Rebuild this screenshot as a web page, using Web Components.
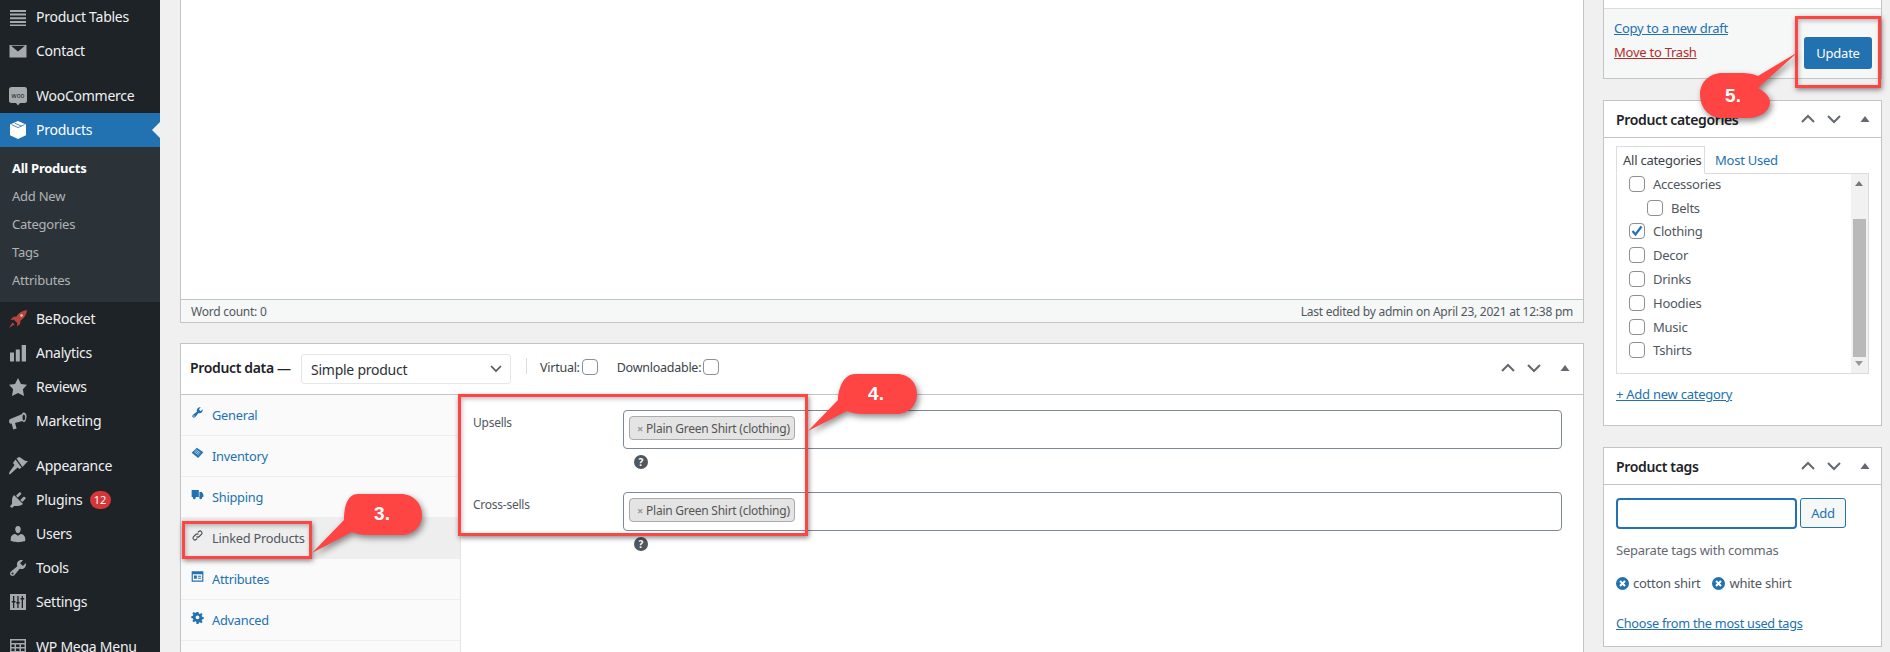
<!DOCTYPE html>
<html lang="en"><head><meta charset="utf-8"><title>Edit product</title>
<style>
html,body{margin:0;padding:0;height:652px;overflow:hidden;background:#f0f0f1;}
body{font-family:"Noto Sans","Open Sans",sans-serif;font-size:13px;color:#50575e;position:relative;letter-spacing:-.25px}
wp-page{height:652px}
</style></head><body>
<wp-page>
  <wp-menu slot="menu">
    <wp-item icon="lines">Product Tables</wp-item>
    <wp-item icon="mail">Contact</wp-item>
    <wp-item icon="woo" sep>WooCommerce</wp-item>
    <wp-item icon="cube" current>Products</wp-item>
    <wp-submenu>
      <wp-subitem strong>All Products</wp-subitem>
      <wp-subitem>Add New</wp-subitem>
      <wp-subitem>Categories</wp-subitem>
      <wp-subitem>Tags</wp-subitem>
      <wp-subitem>Attributes</wp-subitem>
    </wp-submenu>
    <wp-item icon="rocket" class="after-sub">BeRocket</wp-item>
    <wp-item icon="bars">Analytics</wp-item>
    <wp-item icon="star">Reviews</wp-item>
    <wp-item icon="mega">Marketing</wp-item>
    <wp-item icon="brush" sep>Appearance</wp-item>
    <wp-item icon="plug" badge="12">Plugins</wp-item>
    <wp-item icon="user">Users</wp-item>
    <wp-item icon="wrench">Tools</wp-item>
    <wp-item icon="sliders">Settings</wp-item>
    <wp-item icon="grid" sep>WP Mega Menu</wp-item>
  </wp-menu>

  <wp-editor slot="main-left" left="Word count: 0" right="Last edited by admin on April 23, 2021 at 12:38 pm"></wp-editor>
  <wp-product-data slot="main-left">
    <wp-tab icon="wrench">General</wp-tab>
    <wp-tab icon="tag">Inventory</wp-tab>
    <wp-tab icon="truck">Shipping</wp-tab>
    <wp-tab icon="link" active>Linked Products</wp-tab>
    <wp-tab icon="card">Attributes</wp-tab>
    <wp-tab icon="gear">Advanced</wp-tab>
    <wp-field slot="fields" label="Upsells">Plain Green Shirt (clothing)</wp-field>
    <wp-field slot="fields" label="Cross-sells">Plain Green Shirt (clothing)</wp-field>
  </wp-product-data>

  <wp-publish slot="main-right"></wp-publish>
  <wp-postbox slot="main-right" heading="Product categories" style="height:326px"><wp-categories></wp-categories></wp-postbox>
  <wp-postbox slot="main-right" heading="Product tags" style="height:200px"><wp-tags></wp-tags></wp-postbox>
</wp-page>

<wp-highlight style="left:182px;top:521px;width:130px;height:38px"></wp-highlight>
<wp-highlight style="left:458px;top:394px;width:350px;height:142px"></wp-highlight>
<wp-highlight style="left:1795px;top:16px;width:86px;height:72px"></wp-highlight>
<wp-callout style="left:309px;top:490px;width:116px;height:66px" d="M49 4H92C104 4 113 13 113 25S104 45 92 45H59C52 45 47 44 43 42L3 63 35 30C35 20 37 4 49 4Z" tx="73" ty="24">3.</wp-callout>
<wp-callout style="left:805px;top:370px;width:116px;height:64px" d="M50 4H92C104 4 112 13 112 24S104 44 92 44H58C52 44 46 43 42 41L3 61 33 30C33 20 38 4 50 4Z" tx="71" ty="24">4.</wp-callout>
<wp-callout style="left:1696px;top:48px;width:106px;height:74px" d="M102 4 62 40C73 46 74 52 74 54 74 63 64 70 52 70H26C13 70 4 60 4 46 4 34 14 25 26 25H46C52 25 58 26 62 28Z" tx="37" ty="48">5.</wp-callout>

<script>
const ICONS={
lines:'<path d="M2 3h16v2H2zm0 3.6h16v2H2zm0 3.7h16v2H2zm0 3.6h16v2H2zm0 3.6h16v1.5H2z"/>',
mail:'<path d="M1.5 4h17v12.5h-17z M3 4.8l7 5.6 7-5.6H3z" fill-rule="evenodd"/>',
woo:'<rect x="1" y="1" width="18" height="16" rx="2.5"/><path d="M8 17h4l-2 2.5z"/><text x="10" y="11.6" font-size="6.4" text-anchor="middle" fill="#1d2327" font-family="Noto Sans" style="letter-spacing:0">woo</text>',
cube:'<path d="M10 1l8 3.4v10.8L10 19l-8-3.8V4.4z"/><path d="M3.5 4.6l6.6 3 6.4-3M6.8 3.2l6.7 2.9" fill="none" stroke="#2271b1" stroke-width=".8"/>',
rocket:'<path d="M19 1c-4.5.4-8 2.6-10.6 6.4L5 8 2.5 11l3.4-.3 3.4 3.4-.3 3.4 3-2.5.6-3.4C16.4 9 18.6 5.500 19 1z" fill="#b5453c"/><path d="M4.500 13.500 1 19l5.500-3.500z" fill="#b5453c"/><circle cx="13.500" cy="6.500" r="1.300" fill="#e9c9c2"/>',
bars:'<path d="M2 9.500h4v9H2zm5.800-3h4v12h-4zM13.700 2h4.300v16.500h-4.300z"/>',
star:'<path d="M10 1l3 6 6 .75-4.120 4.620L16 19l-6-3-6 3 1.130-6.630L1 7.750 7 7z"/>',
mega:'<path d="M18.500 5c0 2.200-1 6.300-2.500 6.300-.6 0-1.100-.5-1.500-1.200L7 12l1.600 5.500-3.300 1L3.600 12.600l-.9.200C1.600 12.600 1 11.400 1.100 10.100c.1-1.200.7-2.100 1.800-2.400L13.800 3.300C14.300 2.300 15 1.600 15.700 1.600 17.200 1.600 18.500 3 18.500 5zM15.800 3.400c-.7 0-1.300 1.300-1.300 3s.6 3 1.300 3 1.300-1.300 1.300-3-.6-3-1.300-3z" fill-rule="evenodd"/>',
brush:'<path d="M8.500 2.500 11 1c2 .4 3 1.700 4.500 2.800 1.300 1 2.800 1.500 4.500 1.200L14.500 11z"/><path d="M7.500 3.500l6 8L11.500 13 9.600 11.500 2.500 18 1 18.500 1.500 16 6.500 9 5 7z"/>',
plug:'<path d="M13.110 4.360L9.870 7.600 8 5.730l3.240-3.240c.35-.34 1.050-.2 1.560.32.52.51.66 1.210.31 1.550zm-8 1.770l.91-1.120 9.010 9.010-1.190.84c-.71.71-2.630 1.160-3.820 1.160H6.140L4.900 17.260c-.59.59-1.540.59-2.120 0-.59-.58-.59-1.530 0-2.120l1.240-1.240v-3.880c0-1.130.4-3.190 1.090-3.890zm7.260 3.970l3.240-3.240c.34-.35 1.040-.21 1.550.31.52.51.66 1.210.31 1.550l-3.240 3.250z"/>',
user:'<path d="M10 9.250c-2.270 0-2.730-3.440-2.730-3.440C7 4.020 7.820 2 9.970 2c2.160 0 2.980 2.020 2.710 3.810 0 0-.41 3.440-2.680 3.440zm0 2.570L12.720 10c2.390 0 4.520 2.330 4.520 4.530v2.490s-3.650 1.130-7.240 1.130c-3.650 0-7.240-1.130-7.240-1.130v-2.490c0-2.250 1.940-4.480 4.470-4.480z"/>',
wrench:'<path fill-rule="evenodd" d="M16.680 9.770c-1.340 1.340-3.300 1.670-4.950.99l-5.410 6.520c-.99.99-2.590.99-3.580 0s-.99-2.590 0-3.570l6.520-5.420c-.68-1.650-.35-3.610.99-4.950 1.280-1.280 3.120-1.620 4.720-1.060l-2.890 2.890 2.820 2.820 2.860-2.870c.53 1.580.18 3.390-1.080 4.650zM3.810 16.210c.4.39 1.040.39 1.430 0 .4-.4.4-1.040 0-1.430-.39-.4-1.030-.4-1.430 0-.39.39-.39 1.030 0 1.430z"/>',
sliders:'<path fill-rule="evenodd" d="M2 2h16v16H2zM5 4v5H3.800v1.500H5V16h1.300v-5.500h1.200V9H6.300V4zm8.700 0v2h-1.200v1.500h1.200V16H15V7.500h1.200V6H15V4zM9.300 4v6H8.200v1.500h1.100V16h1.300v-4.500h1.100V10h-1.100V4z"/>',
grid:'<path fill-rule="evenodd" d="M2 2h16v17H2zM3.500 3.500V6h13V3.500zM3.500 7.500v2.500h3V7.500zm4.500 0v2.500h3.500V7.500zm5 0v2.500h3.500V7.500zM3.500 11.500v2.500h3v-2.500zm4.500 0v2.500h3.500v-2.500zm5 0v2.500h3.500v-2.500zM3.500 15.500v2h3v-2zm4.500 0v2h3.500v-2zm5 0v2h3.500v-2z"/>',
tag:'<path d="M1 9 9 1l10 7-8 9z"/><path d="M6 5.500l7 5M5 7.500l7 5M7.500 4l7 5" stroke="#fff" stroke-width=".9" fill="none"/>',
truck:'<path d="M1 3h11v11H1zm12 3h3.500L19 9.500V14h-6z"/><circle cx="5" cy="15" r="2.300"/><circle cx="15" cy="15" r="2.300"/>',
link:'<path fill="none" stroke="currentColor" stroke-width="1.900" d="M8.500 11.500a3 3 0 0 0 4.200 0l3.600-3.600a3 3 0 0 0-4.200-4.200l-1.600 1.600M11.500 8.500a3 3 0 0 0-4.200 0l-3.600 3.600a3 3 0 0 0 4.200 4.200l1.600-1.600"/>',
card:'<path fill-rule="evenodd" d="M1 2h18v16H1zM2.800 6.500V16.200h14.400V6.500zM4.500 8.500h4.500v5H4.500zM10.500 9h5v1.400h-5zm0 3h5v1.400h-5z"/>',
gear:'<path fill-rule="evenodd" d="M8.500 1h3l.5 2.600 1.700.7 2.200-1.500 2.100 2.100-1.500 2.200.7 1.700 2.600.5v3l-2.600.5-.7 1.700 1.500 2.200-2.100 2.100-2.200-1.500-1.700.7-.5 2.600h-3L8 16.400l-1.700-.7-2.200 1.500L2 15.100l1.500-2.200-.7-1.700L.2 10.700v-3l2.600-.5.700-1.700L2 3.300 4.100 1.200l2.200 1.500L8 2zM10 6.500a3 3 0 1 0 0 6 3 3 0 0 0 0-6z" transform="translate(.2 .4) scale(.98)"/>'
};
const svg=(n,s,extra='')=>`<svg viewBox="0 0 20 20" width="${s}" height="${s}" fill="currentColor" ${extra} aria-hidden="true">${ICONS[n]||''}</svg>`;
const def=(name,html,opts={})=>{customElements.define(name,class extends HTMLElement{
  connectedCallback(){ if(this.shadowRoot)return; const r=this.attachShadow({mode:'open'}); r.innerHTML=typeof html==='function'?html(this):html; }
});};

def('wp-page',`<style>
:host{display:grid;grid-template-columns:160px 1fr;height:652px;overflow:hidden}
.main{display:grid;grid-template-columns:1404px 279px;column-gap:19px;padding-left:20px;overflow:hidden;height:652px}
.l,.r{display:flex;flex-direction:column;min-width:0}
.l{gap:20px}.r{gap:21px}
</style><slot name="menu"></slot><div class="main"><div class="l"><slot name="main-left"></slot></div><div class="r"><slot name="main-right"></slot></div></div>`);

def('wp-menu',`<style>:host{display:flex;flex-direction:column;background:#1d2327;height:652px;overflow:hidden;color:#f0f0f1;font-size:14px}</style><slot></slot>`);

def('wp-item',h=>{const cur=h.hasAttribute('current'),sep=h.hasAttribute('sep');const b=h.getAttribute('badge');
return `<style>
:host{display:flex;align-items:center;height:34px;box-sizing:border-box;padding-bottom:1px;flex:none;position:relative;${sep?'margin-top:11px;':''}${cur?'background:#2271b1;color:#fff;':''}}
.i{width:36px;display:flex;justify-content:center;color:${cur?'#fff':'#a7aaad'};box-sizing:border-box}
.i svg{margin-left:-1px}
.b{margin-left:7px;background:#d63638;color:#fff;border-radius:9px;font-size:11px;height:18px;min-width:21px;padding:0 2px;box-sizing:border-box;display:flex;align-items:center;justify-content:center;letter-spacing:0}
${cur?'.a{position:absolute;right:0;top:50%;margin-top:-8px;border:8px solid transparent;border-right-color:#f0f0f1;border-left:0}':''}
</style><span class="i">${svg(h.getAttribute('icon'),20)}</span><slot></slot>${b?`<span class="b">${b}</span>`:''}${cur?'<span class="a"></span>':''}`});

def('wp-submenu',`<style>:host{display:flex;flex-direction:column;background:#2c3338;padding:7px 0 8px;flex:none;margin-bottom:0}</style><slot></slot>`);
def('wp-subitem',h=>`<style>:host{display:flex;align-items:center;height:28px;padding-left:12px;font-size:13px;color:${h.hasAttribute('strong')?'#fff':'#b0b3b6'};font-weight:${h.hasAttribute('strong')?'700':'400'}}</style><slot></slot>`);

def('wp-editor',h=>`<style>
:host{display:flex;flex-direction:column;height:323px;box-sizing:border-box;flex:none;border:1px solid #c3c4c7;border-top:0;background:#fff}
.s{margin-top:auto;height:23px;box-sizing:border-box;border-top:1px solid #c3c4c7;background:#f6f7f7;display:flex;justify-content:space-between;align-items:center;padding:0 10px;font-size:12px;color:#50575e}
</style><div class="s"><span>${h.getAttribute('left')}</span><span>${h.getAttribute('right')}</span></div>`);

def('wp-handles',`<style>:host{display:flex;align-items:center;color:#646970}
svg{display:block}</style>
<svg width="18" height="10" viewBox="0 0 18 10" style="margin-right:8px"><path d="M3 8l6-6 6 6" fill="none" stroke="currentColor" stroke-width="2"/></svg>
<svg width="18" height="10" viewBox="0 0 18 10" style="margin-right:17px"><path d="M3 2l6 6 6-6" fill="none" stroke="currentColor" stroke-width="2"/></svg>
<svg width="10" height="8" viewBox="0 0 10 8"><path d="M5 1l4.500 6h-9z" fill="currentColor"/></svg>`);

def('wp-product-data',`<style>
:host{display:flex;flex-direction:column;background:#fff;border:1px solid #c3c4c7;border-bottom:0;flex:1;min-height:0;box-sizing:border-box}
.h{height:50px;flex:none;display:flex;align-items:center;border-bottom:1px solid #c3c4c7;padding-left:9px;padding-right:13px;box-sizing:content-box}
h2{margin:0;font-size:14px;font-weight:600;color:#1d2327;width:111px;flex:none;margin-top:-4px;white-space:nowrap;letter-spacing:-.35px}
.sel{width:210px;height:30px;box-sizing:border-box;border:1px solid #e6e7e8;border-radius:3px;display:flex;align-items:center;justify-content:space-between;padding:0 7px 0 9px;font-size:14px;color:#2c3338;flex:none}
.sep{width:1px;height:16px;background:#dcdcde;margin:0 13px 0 15px;flex:none;margin-top:-6px}
label{display:flex;align-items:center;gap:2px;color:#3c434a;margin-top:-4px;font-size:12.5px}
label+label{margin-left:19px}
.cb{width:14px;height:14px;border:1px solid #8c8f94;border-radius:4px;display:block;box-sizing:content-box;margin:0}
wp-handles{margin-left:auto;margin-top:-3px}
.b{display:flex;flex:1;min-height:0}
.tabs{width:280px;flex:none;border-right:1px solid #e5e5e6;display:flex;flex-direction:column;background:#fafafa;box-sizing:border-box}
.p{flex:1;padding:15px 21px 0 12px;display:flex;flex-direction:column;gap:23px}
</style>
<div class="h"><h2>Product data —</h2><div class="sel"><span>Simple product</span><svg width="14" height="10" viewBox="0 0 14 10"><path d="M2 2l5 5 5-5" fill="none" stroke="#50575e" stroke-width="1.700"/></svg></div><span class="sep"></span><label>Virtual:<span class="cb"></span></label><label>Downloadable:<span class="cb"></span></label><wp-handles></wp-handles></div>
<div class="b"><div class="tabs"><slot></slot></div><div class="p"><slot name="fields"></slot></div></div>`);

def('wp-tab',h=>{const a=h.hasAttribute('active');return `<style>
:host{display:flex;align-items:center;height:41px;flex:none;box-sizing:border-box;border-bottom:1px solid #eee;padding-left:10px;font-size:12.8px;color:${a?'#50575e':'#2271b1'};background:${a?'#eeeeee':'transparent'};gap:8px}
svg{color:${a?'#50575e':'#2271b1'};margin-top:-5px;flex:none}
</style>${svg(h.getAttribute('icon'),13)}<slot></slot>`});

def('wp-field',h=>`<style>
:host{display:grid;grid-template-columns:150px 1fr;row-gap:6px;font-size:12px}
.lb{color:#50575e;padding-top:4px}
.inp{height:39px;box-sizing:border-box;border:1px solid #7e8993;border-radius:4px;padding:5px;display:flex;align-items:flex-start;background:#fff}
.chip{height:24px;box-sizing:border-box;width:166px;background:#e4e4e4;border:1px solid #aaa;border-radius:4px;display:flex;align-items:center;padding-left:7px;gap:3px;color:#555;white-space:nowrap;overflow:hidden}
.x{color:#999;font-weight:700;font-size:11px}
.help{grid-column:2;margin-left:11px;width:14px;height:14px;border-radius:50%;background:#50575e;color:#fff;font-size:10px;font-weight:700;display:flex;align-items:center;justify-content:center;letter-spacing:0}
</style><div class="lb">${h.getAttribute('label')}</div><div class="inp"><span class="chip"><span class="x">×</span><slot></slot></span></div><div class="help">?</div>`);

def('wp-publish',`<style>
:host{display:block;height:79px;flex:none;box-sizing:border-box;background:#fff;border:1px solid #c3c4c7;border-top:0}
.a{margin-top:8px;height:70px;box-sizing:border-box;border-top:1px solid #dcdcde;background:#f6f7f7;display:flex;justify-content:space-between;padding:0 9px 0 10px}
.ls{display:flex;flex-direction:column;gap:6px;padding-top:10px;font-size:13px}
a{color:#2271b1;text-decoration:underline}
a.t{color:#b32d2e}
button{margin-top:28px;width:68px;height:32px;background:#2271b1;border:0;border-radius:3px;color:#fff;font:inherit;letter-spacing:inherit;font-size:13px}
</style><div class="a"><div class="ls"><a href="#">Copy to a new draft</a><a class="t" href="#">Move to Trash</a></div><button>Update</button></div>`);

def('wp-postbox',h=>`<style>
:host{display:flex;flex-direction:column;background:#fff;border:1px solid #c3c4c7;box-sizing:border-box;flex:none}
.h{height:36px;flex:none;display:flex;align-items:center;justify-content:space-between;border-bottom:1px solid #c3c4c7;padding:0 11px 0 12px}
h2{margin:0;font-size:14px;font-weight:600;color:#1d2327;letter-spacing:-.35px}
.c{padding:0 12px;flex:1;min-height:0}
</style><div class="h"><h2>${h.getAttribute('heading')}</h2><wp-handles></wp-handles></div><div class="c"><slot></slot></div>`);

const cats=[['Accessories',0],['Belts',1],['Clothing',0,1],['Decor',0],['Drinks',0],['Hoodies',0],['Music',0],['Tshirts',0]];
def('wp-categories',`<style>
:host{display:block;padding-top:8px;color:#50575e}
.t{display:flex;height:28px;align-items:center}
.t span{padding:0 6px;height:28px;display:flex;align-items:center;box-sizing:border-box;border:1px solid #dcdcde;border-bottom:1px solid #fff;width:89px;position:relative;z-index:1;color:#3c434a;white-space:nowrap}
.t a{color:#2271b1;margin-left:10px}
.pan{height:201px;box-sizing:border-box;border:1px solid #dcdcde;margin-top:-1px;position:relative;overflow:hidden;width:253px}
.row{display:flex;align-items:center;height:23.8px;padding-left:12px;gap:8px}
.row.in{padding-left:30px}
.row:first-child{margin-top:-2px}
.cb{width:16px;height:16px;box-sizing:border-box;border:1px solid #8c8f94;border-radius:4px;display:block;flex:none;color:#2271b1}
.cb svg{display:block;margin:-1px}
.sb{position:absolute;right:0;top:0;bottom:0;width:17px;background:#f1f1f1}
.th{position:absolute;left:2px;right:2px;top:45px;height:138px;background:#b9b9b9}
.sb i{position:absolute;left:4px;border:4px solid transparent;border-top:0;border-bottom:5px solid #777}
.sb i.d{bottom:7px;border-bottom:0;border-top:5px solid #999}.sb i.u{top:7px}
.add{display:block;margin-top:11px;color:#2271b1;text-decoration:underline}
</style><div class="t"><span>All categories</span><a>Most Used</a></div>
<div class="pan">${cats.map(c=>`<div class="row${c[1]?' in':''}"><span class="cb">${c[2]?'<svg viewBox="0 0 16 16" width="16" height="16"><path d="M3.500 8l3 3.500 6-8" fill="none" stroke="#2271b1" stroke-width="2.200"/></svg>':''}</span>${c[0]}</div>`).join('')}<div class="sb"><i class="u"></i><div class="th"></div><i class="d"></i></div></div>
<a class="add">+ Add new category</a>`);

def('wp-tags',`<style>
:host{display:block;padding-top:13px;color:#50575e}
.r{display:flex;gap:3px}
.in{width:181px;height:31px;box-sizing:border-box;border:2px solid #2271b1;border-radius:4px;background:#fff}
.ad{width:46px;height:30px;box-sizing:border-box;border:1px solid #2271b1;border-radius:3px;background:#f6f7f7;color:#2271b1;display:flex;align-items:center;justify-content:center}
p{margin:12px 0 0;color:#646970}
.tg{display:flex;margin-top:15px;align-items:center;gap:4px}
.tg i{width:13px;height:13px;border-radius:50%;background:#2271b1;color:#fff;display:flex;align-items:center;justify-content:center;flex:none}
.tg span{margin-right:8px}
a{display:block;margin-top:22px;color:#2271b1;text-decoration:underline;font-size:12.7px}
</style><div class="r"><div class="in"></div><div class="ad">Add</div></div><p>Separate tags with commas</p>
<div class="tg"><i><svg width="9" height="9" viewBox="0 0 9 9"><path d="M2 2l5 5M7 2l-5 5" stroke="#fff" stroke-width="2"/></svg></i><span>cotton shirt</span><i><svg width="9" height="9" viewBox="0 0 9 9"><path d="M2 2l5 5M7 2l-5 5" stroke="#fff" stroke-width="2"/></svg></i><span>white shirt</span></div>
<a>Choose from the most used tags</a>`);

def('wp-highlight',`<style>:host{position:absolute;box-sizing:border-box;border:3px solid #ff4444;box-shadow:1px 2px 5px rgba(0,0,0,.45),inset 1px 2px 4px rgba(0,0,0,.25);pointer-events:none}</style>`);
def('wp-callout',h=>`<style>:host{position:absolute;display:block;font-family:"Liberation Sans",Arial,sans-serif;font-weight:700;font-size:19px;color:#fff;letter-spacing:0}
svg{position:absolute;left:0;top:0;overflow:visible;filter:drop-shadow(2px 3px 3px rgba(0,0,0,.45))}
span{position:absolute;left:${h.getAttribute('tx')}px;top:${h.getAttribute('ty')}px;transform:translate(-50%,-50%)}
</style><svg width="100%" height="100%"><path d="${h.getAttribute('d')}" fill="#ff4444"/></svg><span><slot></slot></span>`);
</script>
</body></html>
